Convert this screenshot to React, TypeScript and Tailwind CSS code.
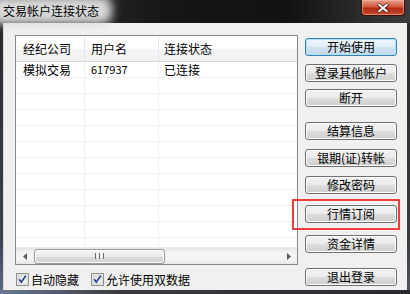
import React from "react";

const FONT = { fontFamily: '"Noto Sans CJK SC", "Noto Sans", sans-serif' };

function Btn({ label, def, mt }: { label: string; def?: boolean; mt: string }) {
  return (
    <div
      className={
        "w-[92px] h-[18px] rounded-[3px] border flex items-center justify-center text-[12px] leading-none text-black " +
        mt +
        (def
          ? " border-[#3c7fb1] bg-[linear-gradient(to_bottom,#eef7fc_0%,#e0eef7_50%,#cfe3ef_51%,#c2d9e8_100%)] shadow-[inset_0_0_0_1px_#a9e3f8]"
          : " border-[#707070] bg-[linear-gradient(to_bottom,#f2f2f2_0%,#ebebeb_50%,#dddddd_51%,#cfcfcf_100%)] shadow-[inset_0_0_0_1px_#fcfcfc]")
      }
    >
      {label}
    </div>
  );
}

function Check() {
  return (
    <svg width="13" height="13" viewBox="0 0 13 13" className="shrink-0">
      <defs>
        <linearGradient id="cbg" x1="0" y1="0" x2="1" y2="1">
          <stop offset="0" stopColor="#dcdcdc" />
          <stop offset="1" stopColor="#fbfbfb" />
        </linearGradient>
      </defs>
      <rect x="0.5" y="0.5" width="12" height="12" fill="#f4f4f4" stroke="#8e8f8f" />
      <rect x="2" y="2" width="9" height="9" fill="url(#cbg)" stroke="#b2b2b2" strokeWidth="0.5" />
      <path d="M3.2 6.3 L5.3 9.2 L9.8 2.8" fill="none" stroke="#1e3f8c" strokeWidth="1.6" />
    </svg>
  );
}

export default function App() {
  const rows = Array.from({ length: 11 });
  return (
    <div className="w-[410px] h-[294px] overflow-hidden flex flex-col bg-[#262628] relative" style={FONT}>
      {/* Title bar */}
      <div className="h-[23px] relative shrink-0 bg-[linear-gradient(to_right,#3a3a3a_0%,#161616_40%,#121212_70%,#3c3c3e_100%)]">
        <div className="absolute left-[-10px] top-[-4px] w-[122px] h-[28px] rounded-[10px] bg-[#d9d9d9] blur-[5px]" />
        <div className="relative pl-[3px] pt-[5px] text-[12px] leading-none text-black">交易帐户连接状态</div>
        <div className="absolute left-[361px] top-0 w-[44px] h-[16px] rounded-b-[4px] border border-t-0 border-[#3b0f0a] bg-[linear-gradient(to_bottom,#e8a08c_0%,#d2583c_45%,#b22a12_55%,#c74a2a_100%)] flex items-center justify-center shadow-[inset_0_0_0_1px_rgba(255,200,180,0.5)]">
          <svg width="12" height="10" viewBox="0 0 12 10">
            <path d="M1 1 L11 9 M11 1 L1 9" stroke="#3b1a14" strokeWidth="3.4" />
            <path d="M1.5 1.3 L10.5 8.7 M10.5 1.3 L1.5 8.7" stroke="#ffffff" strokeWidth="2" />
          </svg>
        </div>
      </div>

      {/* Body */}
      <div className="flex h-[267px] shrink-0">
        <div className="w-[3px] bg-[linear-gradient(to_bottom,#2a2a2e,#3a4250_80%,#5a6a80)]" />
        <div className="w-[404px] h-[267px] bg-[#f0f0f0] flex pl-[11px] pt-[12px] border-l border-[#dadada]">
          {/* left column */}
          <div className="flex flex-col w-[283px]">
            <div className="w-[283px] h-[230px] border border-[#828790] bg-white flex flex-col">
              {/* header */}
              <div className="h-[26px] shrink-0 flex border-b border-[#d5d5d5] bg-[linear-gradient(to_bottom,#ffffff_0%,#ffffff_50%,#f4f5f7_51%,#f1f2f4_100%)] text-[12px] leading-none text-black">
                <div className="w-[69px] border-r border-[#e3e8ee] flex items-center pl-[7px]">经纪公司</div>
                <div className="w-[74px] border-r border-[#e3e8ee] flex items-center pl-[6px]">用户名</div>
                <div className="flex-1 flex items-center pl-[5px]">连接状态</div>
              </div>
              {/* rows */}
              <div className="flex-1 overflow-hidden flex flex-col">
                {rows.map((_, i) => (
                  <div key={i} className="h-[16px] shrink-0 flex border-b border-[#f0f0f0] text-[12px] leading-none text-black">
                    <div className="w-[69px] border-r border-[#f0f0f0] flex items-center pl-[7px]">{i === 0 ? "模拟交易" : ""}</div>
                    <div className="w-[74px] border-r border-[#f0f0f0] flex items-center pl-[6px] text-[11px]">{i === 0 ? "617937" : ""}</div>
                    <div className="flex-1 flex items-center pl-[5px]">{i === 0 ? "已连接" : ""}</div>
                  </div>
                ))}
                <div className="flex-1 flex">
                  <div className="w-[69px] border-r border-[#f0f0f0]" />
                  <div className="w-[74px] border-r border-[#f0f0f0]" />
                </div>
              </div>
              {/* scrollbar */}
              <div className="h-[17px] shrink-0 flex items-center bg-[linear-gradient(to_bottom,#e4e4e4,#f4f4f4_30%,#f4f4f4_70%,#e8e8e8)] border-t border-[#ececec]">
                <div className="w-[17px] h-full flex items-center justify-center">
                  <svg width="4" height="7" viewBox="0 0 4 7"><path d="M4 0 L0 3.5 L4 7 Z" fill="#5a5a5a" /></svg>
                </div>
                <div className="w-[131px] h-[15px] ml-[1px] rounded-[3px] border border-[#9a9a9a] bg-[linear-gradient(to_bottom,#f3f3f3_0%,#ebebeb_50%,#dbdbdb_51%,#d2d2d2_100%)] shadow-[inset_0_0_0_1px_#fafafa] flex items-center justify-center gap-[1px]">
                  <div className="w-[1px] h-[6px] bg-[#6a6a6a]" />
                  <div className="w-[1px] h-[6px] bg-[#f8f8f8]" />
                  <div className="w-[1px] h-[6px] bg-[#6a6a6a]" />
                  <div className="w-[1px] h-[6px] bg-[#f8f8f8]" />
                  <div className="w-[1px] h-[6px] bg-[#6a6a6a]" />
                </div>
                <div className="flex-1" />
                <div className="w-[17px] h-full flex items-center justify-center">
                  <svg width="4" height="7" viewBox="0 0 4 7"><path d="M0 0 L4 3.5 L0 7 Z" fill="#5a5a5a" /></svg>
                </div>
              </div>
            </div>
            {/* checkboxes */}
            <div className="mt-[8px] h-[13px] flex items-center pl-[1px] text-[12px] leading-none text-black">
              <Check />
              <span className="ml-[2px]">自动隐藏</span>
              <div className="ml-[12px]"><Check /></div>
              <span className="ml-[2px]">允许使用双数据</span>
            </div>
          </div>
          {/* buttons */}
          <div className="ml-[7px] flex flex-col pt-[3px]">
            <Btn label="开始使用" def mt="mt-0" />
            <Btn label="登录其他帐户" mt="mt-[8px]" />
            <Btn label="断开" mt="mt-[7px]" />
            <Btn label="结算信息" mt="mt-[15px]" />
            <Btn label="银期(证)转帐" mt="mt-[9px]" />
            <Btn label="修改密码" mt="mt-[9px]" />
            <Btn label="行情订阅" mt="mt-[11px]" />
            <Btn label="资金详情" mt="mt-[12px]" />
            <Btn label="退出登录" mt="mt-[15px]" />
          </div>
        </div>
        <div className="w-[3px] bg-[linear-gradient(to_bottom,#2a2a2e,#3a3a40_80%,#505560)]" />
      </div>
      <div className="flex-1 bg-[linear-gradient(to_right,#6a7a90,#3a3a40_30%,#2a2a2e)]" />

      {/* red annotation box */}
      <div className="absolute left-[292px] top-[199px] w-[108px] h-[31px] border-2 border-[#f23d3d]" />
    </div>
  );
}
